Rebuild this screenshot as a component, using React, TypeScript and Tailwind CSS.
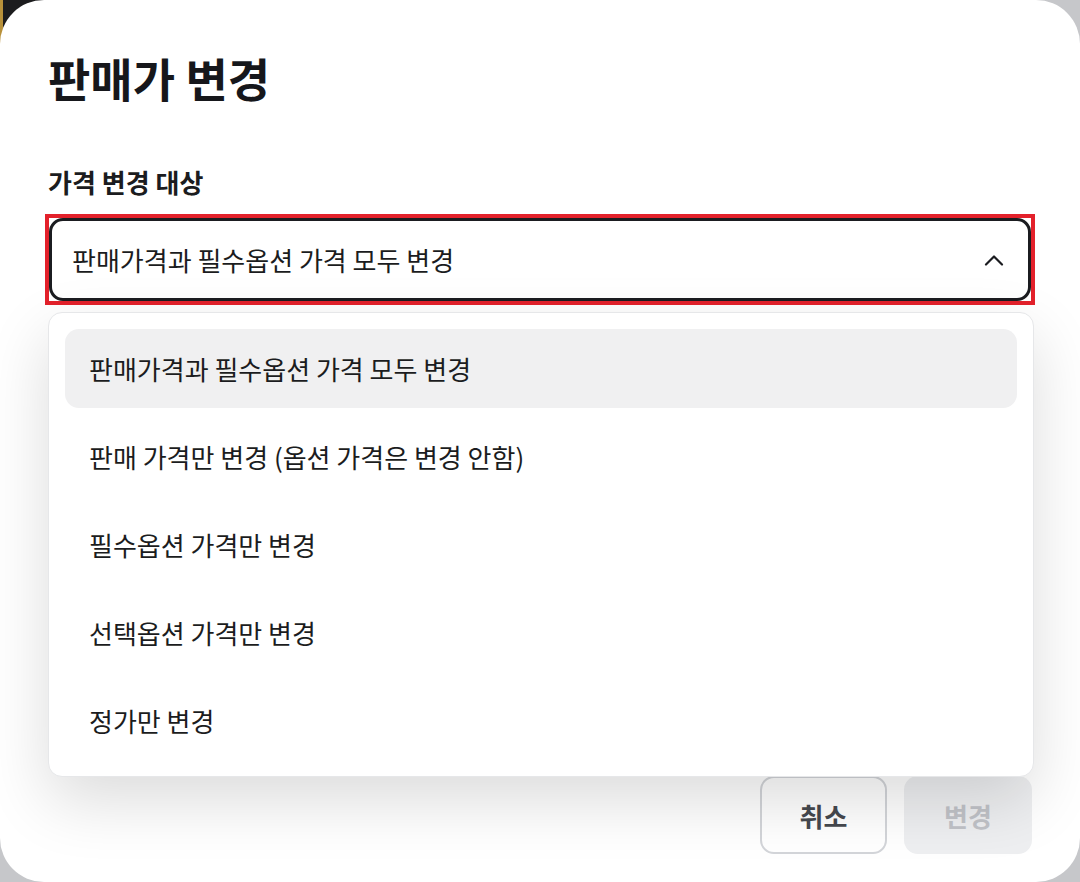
const options = [
  "판매가격과 필수옵션 가격 모두 변경",
  "판매 가격만 변경 (옵션 가격은 변경 안함)",
  "필수옵션 가격만 변경",
  "선택옵션 가격만 변경",
  "정가만 변경",
];

function ChevronUp() {
  return (
    <svg width="20" height="12" viewBox="0 0 20 12" fill="none">
      <path d="M2 10.5 L10 2.5 L18 10.5" stroke="#1b1c20" strokeWidth="2.2" strokeLinecap="round" strokeLinejoin="round" />
    </svg>
  );
}

export default function App() {
  return (
    <div
      className="relative h-[882px] w-[1080px] overflow-hidden bg-[#c6c7ca]"
      style={{ fontFamily: '"Noto Sans CJK KR", "Noto Sans", sans-serif' }}
    >
      {/* page behind the overlay, peeking out of the corner */}
      <div className="absolute left-0 top-0 h-12 w-12 border-l-[3px] border-[#b8913a] bg-[#1c1c1e]" />

      <div className="relative flex h-full w-full flex-col rounded-[44px] bg-white px-12 text-[#1b1c20]">
        <h1 className="mt-[50px] h-[54px] text-[46px] font-bold leading-[54px] text-[#16171b]">판매가 변경</h1>

        <div className="mt-[60px] h-9 text-[26px] font-bold leading-9">가격 변경 대상</div>

        <div className="relative mt-[14px] -mx-[3px]">
          <div className="border-4 border-[#e3212b]">
            <div className="flex h-[83px] items-center justify-between rounded-[14px] border-[3px] border-[#1b1c20] bg-white pl-5 pr-6">
              <span className="text-[26px] leading-9">판매가격과 필수옵션 가격 모두 변경</span>
              <ChevronUp />
            </div>
          </div>

          <div className="absolute left-[3px] right-px top-full z-10 mt-[7px] flex flex-col gap-[9px] rounded-[14px] border border-[#e6e7e9] bg-white p-4 shadow-[0_24px_64px_rgba(0,0,0,0.14)]">
            {options.map((o, i) => (
              <div
                key={o}
                className={
                  "flex h-[79px] items-center rounded-[14px] px-6 text-[26px] " +
                  (i === 0 ? "bg-[#f0f0f1]" : "")
                }
              >
                {o}
              </div>
            ))}
          </div>
        </div>

        <div className="mt-auto mb-7 flex justify-end gap-[17px]">
          <button className="h-[78px] w-[127px] rounded-[14px] border-2 border-[#d3d5d9] bg-white text-[26px] font-bold text-[#46494f]">
            취소
          </button>
          <button className="h-[78px] w-[128px] rounded-[14px] bg-[#eeeff1] text-[26px] font-bold text-[#c1c3c8]">
            변경
          </button>
        </div>
      </div>
    </div>
  );
}
